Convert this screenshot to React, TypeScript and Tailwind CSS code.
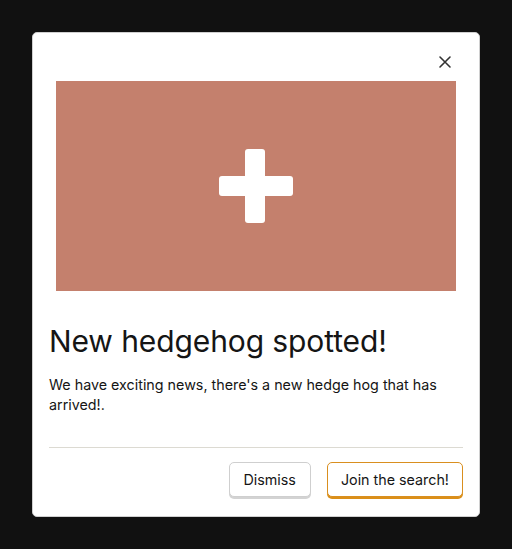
import React from 'react';

export default function App() {
  return (
    <div className="min-h-[549px] w-[512px] bg-[#111111] pt-[32px] pl-[32px]" style={{ fontFamily: 'Inter, "Noto Sans", sans-serif' }}>
      <div className="w-[448px] h-[485px] bg-white rounded-[5px] border border-[#d0d0d0] flex flex-col">
        <div className="flex justify-end h-[48px] pr-[26px] pt-[21px]">
          <button className="w-[16px] h-[16px] flex items-center justify-center text-[#333]">
            <svg width="14" height="14" viewBox="0 0 14 14" fill="none" stroke="currentColor" strokeWidth="1.6" strokeLinecap="round">
              <path d="M2 2L12 12M12 2L2 12" />
            </svg>
          </button>
        </div>
        <div className="mx-[23px] h-[210px] bg-[#c4806d] flex items-center justify-center">
          <svg width="76" height="76" viewBox="0 0 76 76" fill="white">
            <rect x="27" y="1" width="20" height="74" rx="3" />
            <rect x="1" y="28" width="74" height="20" rx="3" />
          </svg>
        </div>
        <div className="px-[16px] flex flex-col flex-1">
          <h2 className="mt-[30px] text-[30px] leading-[40px] text-[#151515] font-normal tracking-[-0.1px]">New hedgehog spotted!</h2>
          <p className="mt-[14px] text-[14.3px] leading-[20px] text-[#151515]">
            We have exciting news, there's a new hedge hog that has arrived!.
          </p>
          <div className="mt-[32px] h-px bg-[#dcdad2]" />
          <div className="flex justify-end gap-[16px] mt-[14px]">
            <button className="h-[35px] px-[14px] rounded-[5px] border border-[#cfcfcf] bg-white text-[14.3px] text-[#151515] shadow-[0_2px_0_#d3d3d3]">
              Dismiss
            </button>
            <button className="h-[35px] px-[13px] rounded-[5px] border border-[#d98f1f] bg-white text-[14.3px] text-[#151515] shadow-[0_2px_0_#db8f18]">
              Join the search!
            </button>
          </div>
        </div>
      </div>
    </div>
  );
}
